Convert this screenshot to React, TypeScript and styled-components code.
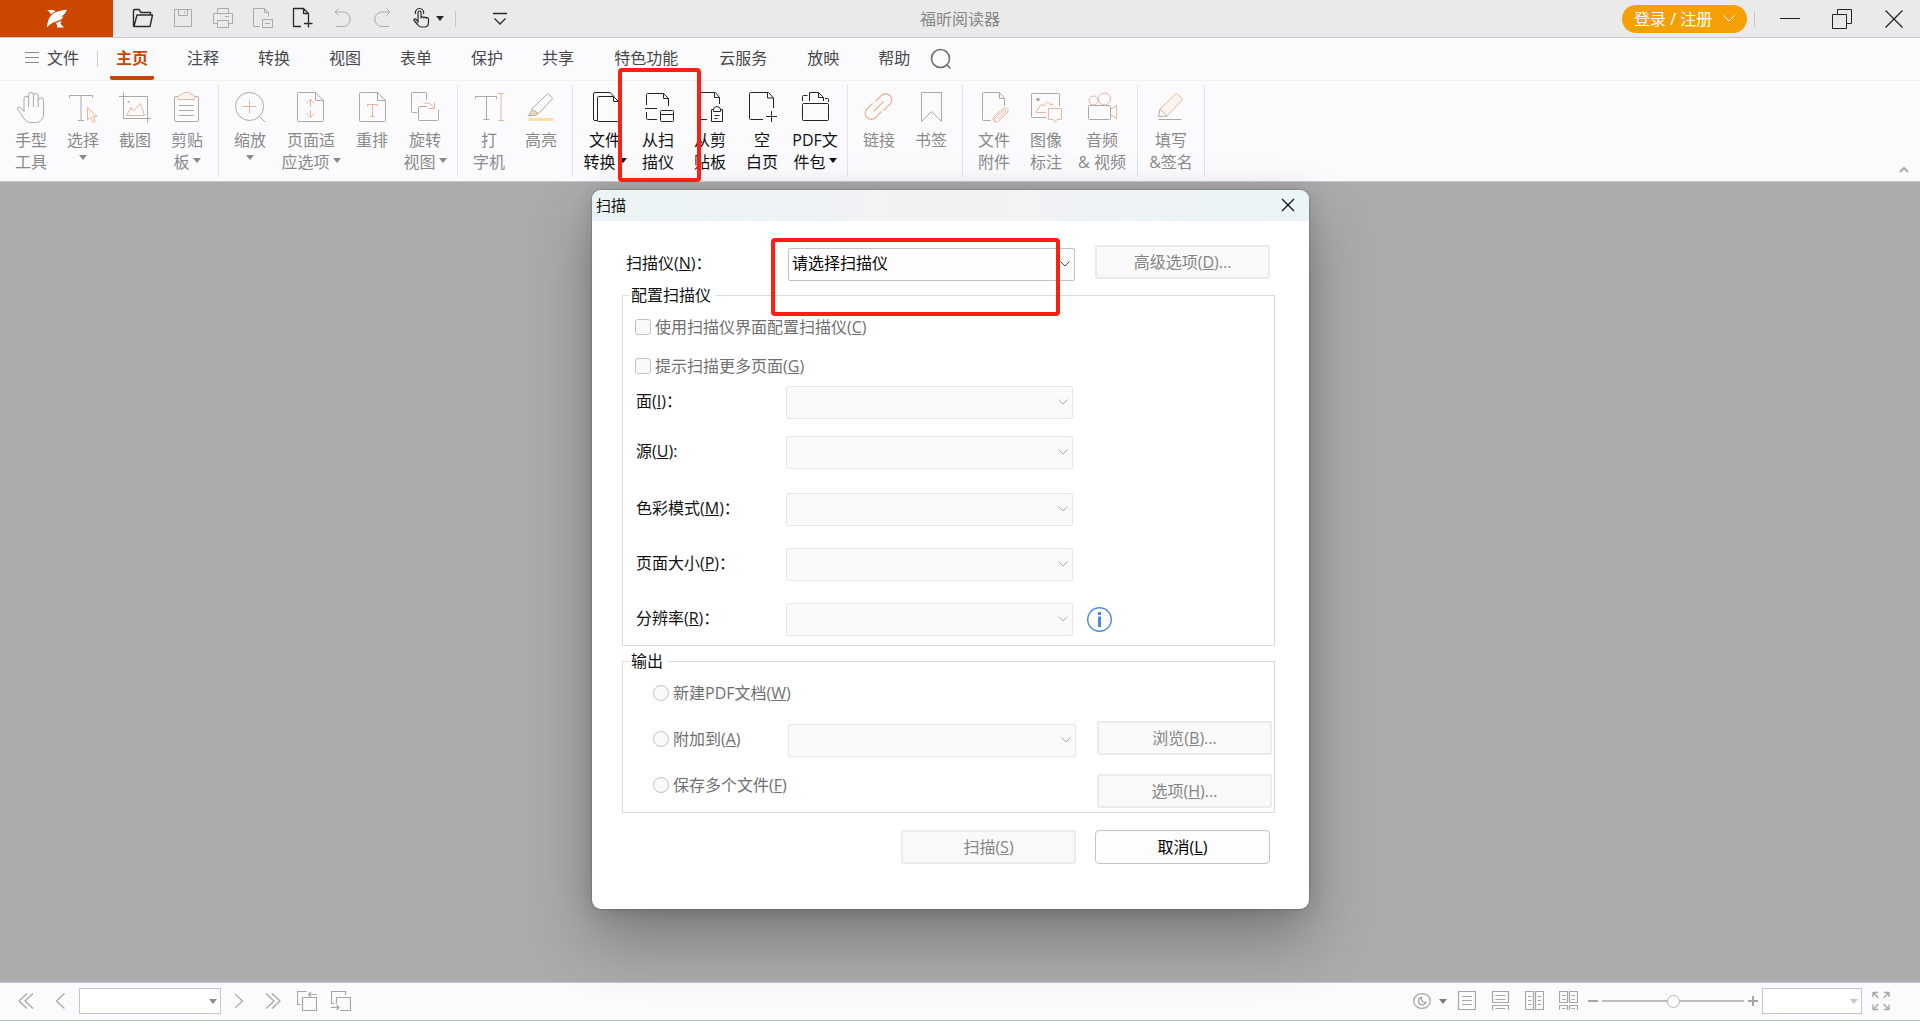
import React from "react";
import styled, { createGlobalStyle, css } from "styled-components";

const GlobalStyle = createGlobalStyle`
  *, *::before, *::after { box-sizing: border-box; }
  body {
    margin: 0;
    font-family: "Open Sans", "Noto Sans CJK SC", sans-serif;
    font-size: 16px;
    line-height: 22px;
    color: #111;
  }
  button, input, select { font: inherit; color: inherit; margin: 0; }
  button { border: 0; padding: 0; background: none; }
  svg { display: block; flex: none; }
`;

const ACCENT = "#e9b59b";
const TINT = "#fdf4ef";

/* ---------- shell ---------- */

const Shell = styled.div`
  min-height: 100vh;
  display: flex;
  flex-direction: column;
`;

const TitleBar = styled.header`
  display: grid;
  grid-template-columns: 1fr auto 1fr;
  height: 38px;
  background: #eaeaea;
  border-bottom: 1px solid #c6c9d8;
`;

const TitleSide = styled.div<{ $end?: boolean }>`
  display: flex;
  align-items: center;
  justify-content: ${(p) => (p.$end ? "flex-end" : "flex-start")};
`;

const Logo = styled.div`
  width: 113px;
  height: 37px;
  margin-right: 18px;
  display: grid;
  place-items: center;
  background: #cb4700;
`;

const QuickTools = styled.div`
  display: flex;
  align-items: center;
  gap: 15px;
`;

const QuickButton = styled.button<{ $dim?: boolean }>`
  display: flex;
  align-items: center;
  color: ${(p) => (p.$dim ? "#ababab" : "#2b2b2b")};
`;

const AppTitle = styled.div`
  align-self: center;
  color: #868686;
`;

const Divider = styled.span<{ $before?: number; $after?: number }>`
  width: 1px;
  height: 16px;
  flex: none;
  background: #c8c8c8;
  margin: 0 ${(p) => p.$after || 0}px 0 ${(p) => p.$before || 0}px;
`;

const Login = styled.button`
  display: flex;
  align-items: center;
  justify-content: space-between;
  width: 125px;
  height: 28px;
  padding: 0 12px;
  border-radius: 14px;
  background: #f5a006;
  color: #fff;
`;

const WindowButtons = styled.div`
  display: flex;
  align-items: center;
  gap: 32px;
  padding-right: 16px;
  color: #222;
`;

const Caret = styled.span<{ $color?: string }>`
  display: inline-block;
  flex: none;
  border: 4px solid transparent;
  border-top: 5px solid ${(p) => p.$color || "currentColor"};
  border-bottom: 0;
`;

/* ---------- menu tabs ---------- */

const TabBar = styled.nav`
  display: flex;
  align-items: stretch;
  height: 43px;
  padding-left: 25px;
  background: #fbfbfe;
  border-bottom: 1px solid #f1f1f3;
  color: #484848;
`;

const FileMenu = styled.button`
  display: flex;
  align-items: center;
  gap: 8px;
  padding-bottom: 2px;
`;

const TabDivider = styled(Divider)`
  align-self: center;
  margin: 0 12px 0 18px;
`;

const Tabs = styled.div`
  display: flex;
  gap: 27px;
`;

const Tab = styled.button<{ $active?: boolean; $wide?: boolean }>`
  padding: 0 ${(p) => (p.$wide ? 7 : 6)}px 2px;
  ${(p) =>
    p.$active &&
    css`
      color: #cb4700;
      font-weight: 700;
      background: linear-gradient(#cb4700, #cb4700) bottom / 100% 4px no-repeat;
      border-radius: 2px;
    `}
`;

const SearchButton = styled.button`
  margin-left: 14px;
  padding-bottom: 1px;
  display: grid;
  place-items: center;
`;

/* ---------- ribbon ---------- */

const Ribbon = styled.div`
  display: flex;
  height: 101px;
  padding: 4px 0;
  background: #fbfbfe;
  border-bottom: 1px solid #c6c9d8;
`;

const RibbonSpacer = styled.div`
  flex: 1;
  display: flex;
  align-items: flex-end;
  justify-content: flex-end;
  padding: 0 11px 4px 0;
`;

const Group = styled.div`
  display: flex;
  padding: 0 5px;
  border-right: 1px solid #e2e2ea;
`;

const ToolButton = styled.button<{ $width: number; $on?: boolean }>`
  position: relative;
  width: ${(p) => p.$width}px;
  padding-top: 6px;
  display: flex;
  flex-direction: column;
  align-items: center;
  white-space: nowrap;
  color: ${(p) => (p.$on ? "#2a2222" : "#a9a9a9")};
`;

const ToolLabel = styled.span<{ $on?: boolean }>`
  margin-top: 6px;
  display: flex;
  flex-direction: column;
  align-items: center;
  color: ${(p) => (p.$on ? "#111" : "#8a8a8a")};
`;

const LabelLine = styled.span`
  display: flex;
  align-items: center;
  gap: 3px;
  height: 22px;
  ${Caret} { margin-bottom: 4px; }
`;

const CaretLine = styled(LabelLine)`
  align-items: flex-start;
  padding-top: 4px;
`;

const Marker = styled.span<{ $x: number; $y: number; $w: number; $h: number }>`
  position: absolute;
  z-index: 2;
  left: ${(p) => p.$x}px;
  top: ${(p) => p.$y}px;
  width: ${(p) => p.$w}px;
  height: ${(p) => p.$h}px;
  border: 4px solid #ff1f12;
  border-radius: 4px;
  pointer-events: none;
`;

/* ---------- dialog ---------- */

const Workspace = styled.main`
  flex: 1;
  display: flex;
  justify-content: center;
  align-items: flex-start;
  padding: 8px 19px 64px 0;
  background: #ababab;
`;

const Dialog = styled.section`
  position: relative;
  z-index: 1;
  width: 717px;
  background: #fff;
  border-radius: 9px;
  box-shadow: 0 0 2px rgba(0, 0, 0, 0.4), 0 2px 21px rgba(0, 0, 0, 0.14),
    0 30px 62px rgba(0, 0, 0, 0.28);
`;

const DialogHeader = styled.div`
  display: flex;
  align-items: center;
  justify-content: space-between;
  height: 31px;
  padding: 0 14px 1px 4px;
  border-radius: 9px 9px 0 0;
  background: linear-gradient(90deg, #ebf4f6, #f2f2f4 50%, #ebf4f6);
`;

const DialogTitle = styled.h1`
  margin: 0;
  font-size: 15px;
  line-height: 22px;
  font-weight: 400;
`;

const DialogBody = styled.form`
  padding: 24px 34px 45px 30px;
`;

const ScannerRow = styled.div`
  display: grid;
  grid-template-columns: 162px 287px 195px;
  height: 36px;
  padding-left: 4px;
  align-items: center;
`;

const FieldSet = styled.fieldset`
  margin: 3px 0 0;
  padding: 0;
  min-width: 0;
  border: 1px solid #dcdcdc;
  & + & { margin-top: 4px; }
`;

const Legend = styled.legend`
  margin-left: 6px;
  padding: 0 5px 0 2px;
`;

const ConfigArea = styled.div`
  padding: 10px 0 9px 12px;
`;

const OutputArea = styled.div`
  padding: 10px 2px 4px 30px;
  display: flex;
  flex-direction: column;
  gap: 17px;
`;

const OutputRow = styled.div<{ $tall?: boolean }>`
  display: grid;
  grid-template-columns: 135px 288px 1fr;
  align-items: start;
  min-height: ${(p) => (p.$tall ? 36 : 22)}px;
`;

const Choice = styled.label<{ $middle?: boolean }>`
  display: flex;
  align-items: center;
  gap: 4px;
  height: 22px;
  white-space: nowrap;
  color: #6f6f6f;
  align-self: ${(p) => (p.$middle ? "center" : "auto")};
  & + & { margin-top: 17px; }
`;

const Tick = styled.input`
  appearance: none;
  width: 16px;
  height: 16px;
  flex: none;
  border: 1px solid #c3c3c3;
  background: #f9f9f9;
  border-radius: ${(p) => (p.type === "radio" ? "50%" : "3px")};
`;

const ConfigRow = styled.div<{ $gap: number }>`
  display: grid;
  grid-template-columns: 151px 287px auto;
  justify-content: start;
  align-items: center;
  margin-top: ${(p) => p.$gap}px;
`;

const FieldLabel = styled.label`
  padding: 0 0 3px 1px;
`;

const SelectBox = styled.div<{ $end?: boolean }>`
  position: relative;
  align-self: ${(p) => (p.$end ? "end" : "auto")};
`;

const SelectChevron = styled.span`
  position: absolute;
  right: 5px;
  top: 13px;
  pointer-events: none;
`;

const Select = styled.select`
  appearance: none;
  display: block;
  width: 100%;
  height: 33px;
  padding: 0 24px 4px 3px;
  border: 1px solid #c2c2c2;
  border-radius: 2px;
  background: #fdfdfd;
  color: #000;
  &:disabled {
    opacity: 1;
    border-color: #e6e6e6;
    background: #fafafa;
  }
`;

const PushButton = styled.button`
  width: 175px;
  height: 34px;
  justify-self: end;
  align-self: start;
  border: 1px solid #c4c4c4;
  border-radius: 4px;
  background: #fdfdfd;
  color: #000;
  &:disabled {
    border: 2px solid #ebebeb;
    border-radius: 2px;
    background: #f9f9f9;
    color: #848484;
  }
`;

const Footer = styled.div`
  display: flex;
  justify-content: flex-end;
  gap: 19px;
  margin-top: 17px;
  padding-right: 5px;
`;

const InfoButton = styled.button`
  margin-left: 14px;
`;

/* ---------- status bar ---------- */

const StatusBar = styled.footer`
  display: flex;
  align-items: center;
  justify-content: space-between;
  height: 39px;
  padding: 0 30px 1px 15px;
  background: #fbfbfe;
  border-top: 1px solid #c2c8d8;
  border-bottom: 1px solid #a9c3ae;
  color: #a6a6a6;
`;

const StatusSide = styled.div<{ $gap: number }>`
  display: flex;
  align-items: center;
  gap: ${(p) => p.$gap}px;
`;

const ComboBox = styled.div<{ $width: number }>`
  position: relative;
  width: ${(p) => p.$width}px;
`;

const ComboSelect = styled.select`
  appearance: none;
  display: block;
  width: 100%;
  height: 26px;
  border: 1px solid #c0c6d8;
  border-radius: 0;
  background: #fff;
  &:disabled { opacity: 1; }
`;

const ComboCaret = styled.span`
  position: absolute;
  right: 4px;
  top: 11px;
  display: flex;
  pointer-events: none;
`;

const ViewButton = styled.button`
  display: flex;
  align-items: center;
  gap: 8px;
`;

const ZoomSlider = styled.input`
  appearance: none;
  width: 142px;
  height: 14px;
  background: linear-gradient(#bdbdbd, #bdbdbd) center / 100% 2px no-repeat;
  &::-webkit-slider-thumb {
    appearance: none;
    width: 13px;
    height: 13px;
    border: 1px solid #b4b4b4;
    border-radius: 50%;
    background: #fff;
  }
`;

/* ---------- drawings ---------- */

type DrawProps = { size?: number; width?: number; children: React.ReactNode };

const Draw = ({ size = 32, width, children }: DrawProps) => (
  <svg
    width={width || size}
    height={size}
    viewBox={`0 0 ${width || size} ${size}`}
    fill="none"
    stroke="currentColor"
    strokeWidth="1"
    strokeLinejoin="round"
    aria-hidden="true"
  >
    {children}
  </svg>
);

const toolIcons: Record<string, React.ReactNode> = {
  hand: (
    <path d="M9 20.5V7.500a2.300 2.300 0 0 1 4.600 0V16M13.600 7V3.800a2.400 2.400 0 0 1 4.800 0V16M18.400 5a2.400 2.400 0 0 1 4.800 0V16M23.200 9.500a2.700 2.700 0 0 1 5.400 0V22c0 6-3 9.500-8 9.500h-4.500c-3.500 0-5.500-1.500-7.500-4.500L2.700 18c-.5-1.500 1.300-2.700 3-1.500L9 20.500" />
  ),
  select: (
    <>
      <path d="M2.500 7V4.500h23V7M14 4.500v25M11 29.500h6" />
      <path d="M20.500 16.500V29l3.300-2.500 2.200 4.800 2.300-1-2.100-4.700h4z" stroke={ACCENT} fill={TINT} />
    </>
  ),
  crop: (
    <>
      <path d="M4.500 1.500v26H32M0 5.500h28.500v26" />
      <circle cx="9.500" cy="11" r="1" fill="currentColor" stroke="none" />
      <path d="M7.500 24.500L12 16.500l2.500 3.500 7-7.500 4 12z" stroke={ACCENT} />
    </>
  ),
  paste: (
    <>
      <rect x="3.500" y="5.500" width="24" height="25" rx="1.500" />
      <path d="M8 14.500h15M8 19.500h15M8 24.500h15" />
      <path d="M7.500 8.500c-1.500-3 0-5 3.500-5 .5-1.300 1.500-2 3-2h3c1.500 0 2.500.7 3 2 3.500 0 5 2 3.500 5z" stroke={ACCENT} fill={TINT} />
    </>
  ),
  zoom: (
    <>
      <circle cx="15.500" cy="15.500" r="14" />
      <path d="M25.500 25.500l5.500 5.500" />
      <path d="M8.500 15.500h14M15.500 8.500v14" stroke={ACCENT} />
    </>
  ),
  fit: (
    <>
      <path d="M20.500 1.500h-17a1 1 0 0 0-1 1v27a1 1 0 0 0 1 1h24a1 1 0 0 0 1-1v-20zv8h8" />
      <path d="M15.500 9v7M15.500 19v7M11.500 12.500l4-4 4 4M11.500 22.500l4 4 4-4" stroke={ACCENT} />
    </>
  ),
  reflow: (
    <>
      <path d="M21.500 1.500h-17a1 1 0 0 0-1 1v27a1 1 0 0 0 1 1h24a1 1 0 0 0 1-1v-20zv8h8" />
      <path d="M11.500 15.500v-2h10v2M16.500 13.500v12M14.500 25.500h4" stroke={ACCENT} />
    </>
  ),
  rotate: (
    <>
      <path d="M8 21.500H3.500a1 1 0 0 1-1-1v-18a1 1 0 0 1 1-1h13a1 1 0 0 1 1 1V9M18 15.500h-7.500a1 1 0 0 0-1 1v12a1 1 0 0 0 1 1h18a1 1 0 0 0 1-1V19" />
      <path d="M14.500 12.500c4-1.500 8 0 10.500 4.500M25.500 11.500v6h-6" stroke={ACCENT} />
    </>
  ),
  type: (
    <>
      <path d="M2.500 8V5.500h21V8M13.500 5.500v23M10.500 28.500h6" />
      <path d="M25 2.500h6M25 29.500h6M28 2.500v27" stroke={ACCENT} />
    </>
  ),
  highlight: (
    <>
      <path d="M3.500 28.500h25" stroke="#fbe0a4" strokeWidth="3" />
      <path d="M7 17.500L22 3.500c.5-.5 1.300-.5 1.800 0L27 6.500c.5.500.5 1.300 0 1.800L13.500 22.500l-6-2z" />
      <path d="M7.500 18.500l-4 6.500 8-1 1-2z" fill="#f6dcae" />
    </>
  ),
  convert: (
    <>
      <path d="M9 29.500H6a1.500 1.500 0 0 1-1.500-1.500V3A1.500 1.500 0 0 1 6 1.500h15l4 4" />
      <path d="M24.500 5.500h-15a1 1 0 0 0-1 1v23a1 1 0 0 0 1 1h19a1 1 0 0 0 1-1v-19zv5h5" />
    </>
  ),
  scanner: (
    <>
      <path d="M4.500 14V3.500a1 1 0 0 1 1-1h16l5 5V15M21.500 2.500v5h5M3 17.500h12M4.500 21v6.500a1 1 0 0 0 1 1H15" />
      <rect x="18.500" y="19.500" width="13" height="11" rx="1" />
      <path d="M18.500 23.500h13" />
    </>
  ),
  fromClip: (
    <>
      <path d="M13 28.500H4.500a1 1 0 0 1-1-1v-25a1 1 0 0 1 1-1h17l4 5V13M20.500 1.500v5h5" />
      <path d="M19.500 18.500h-2v12h11v-12h-2M19.500 20.500v-2a3 2.500 0 0 1 7 0v2zM20.500 24.500h5M20.500 27.500h3" />
    </>
  ),
  blank: (
    <path d="M17 28.500H4.500a1 1 0 0 1-1-1v-25a1 1 0 0 1 1-1h18l5 5.500V17M21.500 1.500v5.500h6M25.500 20v11M20 25.500h11" />
  ),
  portfolio: (
    <>
      <rect x="3.500" y="12.500" width="26" height="17" rx="1" />
      <path d="M10.500 10V1.500h9l5 5V10M19.500 1.500v5h5M3.500 10V5.500a1 1 0 0 1 1-1h4M26 7.500h2.500a1 1 0 0 1 1 1V11" />
    </>
  ),
  link: (
    <path d="M12.500 10.500l6-6a6 6 0 0 1 8.500 8.500l-6.500 6.500M9.500 12.500L4 18a6 6 0 0 0 8.500 8.500l6-6M10.500 20.500l10-10" stroke={ACCENT} strokeWidth="1.300" />
  ),
  bookmark: <path d="M6.500 1.500h20v29L16.500 20.500l-10 10z" />,
  attach: (
    <>
      <path d="M12.500 29.500h-7a1 1 0 0 1-1-1v-26a1 1 0 0 1 1-1h16l5 6V15M21.500 1.500v6h5" />
      <path d="M20 28l7-6.500c1.500-1.500 0-3.500-1.700-2l-8 7.300c-2.500 2.500.7 5.500 3.200 3.200l8.500-8c3-3-1-7-4-4.300L16.500 25c-2.500 2.500-1.500 6 2 6" stroke={ACCENT} />
    </>
  ),
  imageNote: (
    <>
      <path d="M16 26.500H2.500a1 1 0 0 1-1-1v-22a1 1 0 0 1 1-1h26a1 1 0 0 1 1 1V15" />
      <circle cx="8" cy="8.500" r="1.800" fill="currentColor" stroke="none" />
      <path d="M16 21.500H6l4.500-7.500h2l1.500 1 2.500-3.500h2l2 3 1.500-2 1 2M18.500 17.500h13v11H27l-2 2.500-2-2.500h-4.500z" stroke={ACCENT} />
    </>
  ),
  media: (
    <>
      <rect x="2.500" y="14.500" width="22" height="14" rx="1" />
      <path d="M24.500 18.500l6-4v13l-6-4" stroke={ACCENT} />
      <circle cx="7.500" cy="9.500" r="4.500" stroke={ACCENT} />
      <circle cx="18.500" cy="8" r="6" stroke={ACCENT} />
    </>
  ),
  sign: (
    <>
      <path d="M5 18L20.500 3c.6-.6 1.400-.6 2 0L27 7.500c.5.500.5 1.200 0 1.700L12 25z" stroke={ACCENT} fill={TINT} />
      <path d="M5 18l-1.500 7.500L12 25M3.500 28.500h23" />
    </>
  ),
};

const quickIcons: Record<string, React.ReactNode> = {
  open: <path d="M3 20.500a.5.500 0 0 1-.5-.5V4.500a1 1 0 0 1 1-1H8l2 3h9.500V9M3 20.500L6 9h15.500L19 20.500z" strokeWidth="1.400" />,
  save: <path d="M3.500 3.500h17v17h-17zM7.500 3.500v6h9v-6M13.500 5.500v2" />,
  print: <path d="M6.500 7.500v-5h11v5M6.500 17.500h-4v-10h19v10h-4M6.500 14.500h11v7h-11zM14 10.500h4" />,
  batch: <path d="M9 20.500H2.500v-18h11l4 4v4M13.500 2.500v4h4M11.500 13.500h10v8h-10zM14 17.500h5" />,
  create: <path d="M10 20.500H2.500v-18h10l5 5V13M12.500 2.500v5h5M17.500 13v8.500M13 17.500h8.500" strokeWidth="1.300" />,
  undo: <path d="M7.500 2.500L4 6h8a7.200 7.200 0 0 1 0 14.500H5M4 6l3.500 3.500" />,
  redo: <path d="M15.500 2.500L19 6h-8a7.200 7.200 0 0 0 0 14.500h7M19 6l-3.500 3.500" />,
  touch: (
    <path d="M7 17V6.500a1.500 1.500 0 0 1 3 0V12c0-1.500 2.800-1.500 2.800 0 0-1.300 2.500-1.300 2.500.3 0-1.200 2.200-1 2.200.7v3.500c0 3-2 4.500-4.500 4.500h-2.500c-2 0-3-1-4-2.500L3 14.500c-.5-1.500 1-2 2-1L7 15.500M4.500 8a4.200 4.200 0 1 1 8 0" strokeWidth="1.200" />
  ),
};

/* ---------- content ---------- */

type Tool = { icon: string; lines: string[]; width?: number; caret?: boolean; on?: boolean; marked?: boolean };

const groups: Tool[][] = [
  [
    { icon: "hand", lines: ["手型", "工具"] },
    { icon: "select", lines: ["选择"], caret: true },
    { icon: "crop", lines: ["截图"] },
    { icon: "paste", lines: ["剪贴", "板"], caret: true },
  ],
  [
    { icon: "zoom", lines: ["缩放"], caret: true },
    { icon: "fit", lines: ["页面适", "应选项"], caret: true, width: 70 },
    { icon: "reflow", lines: ["重排"] },
    { icon: "rotate", lines: ["旋转", "视图"], caret: true, width: 54 },
  ],
  [
    { icon: "type", lines: ["打", "字机"] },
    { icon: "highlight", lines: ["高亮"] },
  ],
  [
    { icon: "convert", lines: ["文件", "转换"], caret: true, on: true, width: 54 },
    { icon: "scanner", lines: ["从扫", "描仪"], on: true, marked: true },
    { icon: "fromClip", lines: ["从剪", "贴板"], on: true },
    { icon: "blank", lines: ["空", "白页"], on: true },
    { icon: "portfolio", lines: ["PDF文", "件包"], caret: true, on: true, width: 54 },
  ],
  [
    { icon: "link", lines: ["链接"] },
    { icon: "bookmark", lines: ["书签"] },
  ],
  [
    { icon: "attach", lines: ["文件", "附件"] },
    { icon: "imageNote", lines: ["图像", "标注"] },
    { icon: "media", lines: ["音频", "& 视频"], width: 60 },
  ],
  [{ icon: "sign", lines: ["填写", "&签名"], width: 56 }],
];

const tabs = ["主页", "注释", "转换", "视图", "表单", "保护", "共享", "特色功能", "云服务", "放映", "帮助"];

const configFields = [
  { id: "side", name: "面", hotkey: "I", colon: "：", gap: 9 },
  { id: "source", name: "源", hotkey: "U", colon: ":", gap: 17 },
  { id: "color", name: "色彩模式", hotkey: "M", colon: "：", gap: 24 },
  { id: "pageSize", name: "页面大小", hotkey: "P", colon: "：", gap: 22 },
  { id: "resolution", name: "分辨率", hotkey: "R", colon: "：", gap: 22, info: true },
];

const Hot = ({ text, k, tail = "" }: { text: string; k: string; tail?: string }) => (
  <span>
    {text}(<u>{k}</u>){tail}
  </span>
);

const ToolItem = ({ tool }: { tool: Tool }) => {
  const caret = tool.caret ? <Caret /> : null;
  return (
    <ToolButton type="button" $width={tool.width || 52} $on={tool.on}>
      <Draw>{toolIcons[tool.icon]}</Draw>
      <ToolLabel $on={tool.on}>
        <LabelLine>{tool.lines[0]}</LabelLine>
        {tool.lines[1] ? (
          <LabelLine>
            {tool.lines[1]}
            {caret}
          </LabelLine>
        ) : (
          caret && <CaretLine>{caret}</CaretLine>
        )}
      </ToolLabel>
      {tool.marked && <Marker $x={-14} $y={-17} $w={83} $h={114} />}
    </ToolButton>
  );
};

type DropProps = { id: string; label?: string; value?: string; end?: boolean; marked?: boolean };

const Drop = ({ id, label, value, end, marked }: DropProps) => (
  <SelectBox $end={end}>
    <Select id={id} aria-label={label} disabled={!value}>
      {value && <option>{value}</option>}
    </Select>
    <SelectChevron>
      <svg width="10" height="6" fill="none" stroke={value ? "#444" : "#ababab"}>
        <path d="M.5.500l4.500 4.500L9.500.5" />
      </svg>
    </SelectChevron>
    {marked && <Marker $x={-17} $y={-10} $w={289} $h={78} />}
  </SelectBox>
);

const QuickIcon = ({ name, label, dim, caret }: { name: string; label: string; dim?: boolean; caret?: boolean }) => (
  <QuickButton type="button" aria-label={label} $dim={dim}>
    <Draw size={25}>{quickIcons[name]}</Draw>
    {caret && <Caret />}
  </QuickButton>
);

export default function App() {
  return (
    <Shell>
      <GlobalStyle />
      <TitleBar>
        <TitleSide>
          <Logo>
            <svg width="22" height="20" viewBox="0 0 22 20" fill="#fff">
              <path d="M21 .5C14 1.500 8.500 3 5.500 6 2.500 9 1.500 13 .8 18.500 4 14.500 8 13 12.500 11.500c3-1 4-2 5-4l-2.500.3c2.500-1.500 5-4 6-7.300z" />
              <path d="M1 1h6.500l2 1.700C7.500 3.300 6 4 4.800 5.200 4 3.500 2.500 2 1 1zM9.500 14c2.500-.8 4.500-1.500 6-2.500l-1 3c1 1.500 2 2.500 3.500 4h-7c.5-1.800 0-3.200-1.500-4.500z" />
            </svg>
          </Logo>
          <QuickTools>
            <QuickIcon name="open" label="打开" />
            <QuickIcon name="save" label="保存" dim />
            <QuickIcon name="print" label="打印" dim />
            <QuickIcon name="batch" label="批量打印" dim />
            <QuickIcon name="create" label="新建" />
            <QuickIcon name="undo" label="撤销" dim />
            <QuickIcon name="redo" label="重做" dim />
            <QuickIcon name="touch" label="触摸模式" caret />
          </QuickTools>
          <Divider $before={11} $after={36} />
          <QuickButton type="button" aria-label="自定义快速访问工具栏">
            <svg width="16" height="16" fill="none" stroke="currentColor" strokeWidth="1.300">
              <path d="M1 2.500h14M2.500 7.500L8 13l5.500-5.500" />
            </svg>
          </QuickButton>
        </TitleSide>
        <AppTitle>福昕阅读器</AppTitle>
        <TitleSide $end>
          <Login type="button">
            登录 / 注册
            <svg width="12" height="7" fill="none" stroke="#fff">
              <path d="M.5.500L6 6 11.500.5" />
            </svg>
          </Login>
          <Divider $before={7} $after={25} />
          <WindowButtons>
            <button type="button" aria-label="最小化">
              <svg width="20" height="20" stroke="currentColor">
                <path d="M0 9.500h20" />
              </svg>
            </button>
            <button type="button" aria-label="还原">
              <svg width="20" height="20" fill="none" stroke="currentColor">
                <path d="M.5 5.500h14v14H.5zM5.500 5.500v-5h14v14h-5" />
              </svg>
            </button>
            <button type="button" aria-label="关闭">
              <svg width="20" height="20" stroke="currentColor" strokeWidth="1.200">
                <path d="M1.500 1.500l17 17M18.500 1.500l-17 17" />
              </svg>
            </button>
          </WindowButtons>
        </TitleSide>
      </TitleBar>

      <TabBar>
        <FileMenu type="button">
          <svg width="14" height="14" stroke="#8a8a8a">
            <path d="M0 1.500h14M0 6.500h14M0 11.500h14" />
          </svg>
          文件
        </FileMenu>
        <TabDivider />
        <Tabs>
          {tabs.map((name, i) => (
            <Tab type="button" key={name} $active={i === 0} $wide={name.length > 2}>
              {name}
            </Tab>
          ))}
        </Tabs>
        <SearchButton type="button" aria-label="搜索">
          <svg width="22" height="22" fill="none" stroke="#6e6e6e" strokeWidth="1.600">
            <circle cx="10.500" cy="10.500" r="9" />
            <path d="M16.500 16.500l4 4" />
          </svg>
        </SearchButton>
      </TabBar>

      <Ribbon>
        {groups.map((tools, i) => (
          <Group key={i}>
            {tools.map((tool) => (
              <ToolItem key={tool.icon} tool={tool} />
            ))}
          </Group>
        ))}
        <RibbonSpacer>
          <button type="button" aria-label="折叠功能区">
            <svg width="10" height="7" fill="none" stroke="#aaa" strokeWidth="2">
              <path d="M1 6l4-4 4 4" />
            </svg>
          </button>
        </RibbonSpacer>
      </Ribbon>

      <Workspace>
        <Dialog role="dialog" aria-labelledby="scan-title">
          <DialogHeader>
            <DialogTitle id="scan-title">扫描</DialogTitle>
            <button type="button" aria-label="关闭对话框">
              <svg width="14" height="14" stroke="#111" strokeWidth="1.300">
                <path d="M1 1l12 12M13 1L1 13" />
              </svg>
            </button>
          </DialogHeader>
          <DialogBody onSubmit={(e) => e.preventDefault()}>
            <ScannerRow>
              <label htmlFor="scanner">
                <Hot text="扫描仪" k="N" tail="：" />
              </label>
              <Drop id="scanner" value="请选择扫描仪" end marked />
              <PushButton type="button" disabled>
                <Hot text="高级选项" k="D" tail="..." />
              </PushButton>
            </ScannerRow>

            <FieldSet>
              <Legend>配置扫描仪</Legend>
              <ConfigArea>
                <Choice>
                  <Tick type="checkbox" disabled />
                  <Hot text="使用扫描仪界面配置扫描仪" k="C" />
                </Choice>
                <Choice>
                  <Tick type="checkbox" disabled />
                  <Hot text="提示扫描更多页面" k="G" />
                </Choice>
                {configFields.map((f) => (
                  <ConfigRow key={f.id} $gap={f.gap}>
                    <FieldLabel htmlFor={f.id}>
                      <Hot text={f.name} k={f.hotkey} tail={f.colon} />
                    </FieldLabel>
                    <Drop id={f.id} />
                    {f.info && (
                      <InfoButton type="button" aria-label="分辨率说明">
                        <svg width="25" height="25" fill="none" stroke="#4a88dc">
                          <circle cx="12.500" cy="12.500" r="11.800" strokeWidth="1.400" />
                          <path d="M12.500 9.500v10.500M12.500 5v3" strokeWidth="3" />
                        </svg>
                      </InfoButton>
                    )}
                  </ConfigRow>
                ))}
              </ConfigArea>
            </FieldSet>

            <FieldSet>
              <Legend>输出</Legend>
              <OutputArea>
                <OutputRow>
                  <Choice>
                    <Tick type="radio" name="output" disabled />
                    <Hot text="新建PDF文档" k="W" />
                  </Choice>
                </OutputRow>
                <OutputRow $tall>
                  <Choice $middle>
                    <Tick type="radio" name="output" disabled />
                    <Hot text="附加到" k="A" />
                  </Choice>
                  <Drop id="target" label="附加到的文件" end />
                  <PushButton type="button" disabled>
                    <Hot text="浏览" k="B" tail="..." />
                  </PushButton>
                </OutputRow>
                <OutputRow>
                  <Choice>
                    <Tick type="radio" name="output" disabled />
                    <Hot text="保存多个文件" k="F" />
                  </Choice>
                  <span />
                  <PushButton type="button" disabled>
                    <Hot text="选项" k="H" tail="..." />
                  </PushButton>
                </OutputRow>
              </OutputArea>
            </FieldSet>

            <Footer>
              <PushButton type="submit" disabled>
                <Hot text="扫描" k="S" />
              </PushButton>
              <PushButton type="button">
                <Hot text="取消" k="L" />
              </PushButton>
            </Footer>
          </DialogBody>
        </Dialog>
      </Workspace>

      <StatusBar>
        <StatusSide $gap={14}>
          <button type="button" aria-label="首页">
            <Draw size={20} width={22}><path d="M12 2.500L4 10l8 7.500M18 2.500L10 10l8 7.500" strokeWidth="1.200" /></Draw>
          </button>
          <button type="button" aria-label="上一页">
            <Draw size={20} width={14}><path d="M13.500 2.500L5.500 10l8 7.500" strokeWidth="1.200" /></Draw>
          </button>
          <ComboBox $width={142}>
            <ComboSelect aria-label="页码" disabled />
            <ComboCaret><Caret $color="#8a8a8a" /></ComboCaret>
          </ComboBox>
          <button type="button" aria-label="下一页">
            <Draw size={20} width={14}><path d="M-.5 2.500l8 7.500-8 7.500" strokeWidth="1.200" /></Draw>
          </button>
          <button type="button" aria-label="末页">
            <Draw size={20}><path d="M3 2.500l8 7.500-8 7.500M9 2.500l8 7.500-8 7.500" strokeWidth="1.200" /></Draw>
          </button>
          <button type="button" aria-label="上一视图">
            <Draw size={20}><path d="M9.500.500H.5v13h3M5.500 6.500h14v13h-14zM19.500 3.500h-8M14 1l-2.500 2.500L14 6" strokeWidth="1.200" /></Draw>
          </button>
          <button type="button" aria-label="下一视图">
            <Draw size={20}><path d="M14.500 4V.500H.5v12H3M9 19.500h10.500v-13h-14v6M0 16.500h8M5.500 14L8 16.500 5.500 19" strokeWidth="1.200" /></Draw>
          </button>
        </StatusSide>
        <StatusSide $gap={10}>
          <ViewButton type="button" aria-label="阅读模式">
            <Draw size={20} width={18}>
              <ellipse cx="9" cy="10" rx="8.300" ry="7.300" strokeWidth="1.300" />
              <path d="M8.500 6.500a3.700 3.700 0 1 0 4.300 4.700c-2.300.8-4.800-1.200-4.300-4.700z" strokeWidth="1.300" />
            </Draw>
            <Caret $color="#7c7c7c" />
          </ViewButton>
          <StatusSide $gap={15}>
            <button type="button" aria-label="单页">
              <Draw size={20} width={19}><path d="M1.500.500h17v18h-17zM5 5.500h10M5 9.500h10M5 13.500h10" strokeWidth="1.200" /></Draw>
            </button>
            <button type="button" aria-label="连续">
              <Draw size={20} width={19}><path d="M1.500.500h16v11h-16zM4.500 4.500h10M4.500 8.500h10M1.500 19v-4.500h16V19M4.500 17.500h10" strokeWidth="1.200" /></Draw>
            </button>
            <button type="button" aria-label="双页">
              <Draw size={20} width={19}><path d="M.5.500h8v18h-8zM10.500.500h8v18h-8zM3 5.500h3.500M3 9.500h3.500M3 13.500h3.500M12.500 5.500H16M12.500 9.500H16M12.500 13.500H16" strokeWidth="1.200" /></Draw>
            </button>
            <button type="button" aria-label="连续双页">
              <Draw size={20} width={19}><path d="M.5.500h8v11h-8zM10.500.500h8v11h-8zM3 4.500h3.500M3 8.500h3.500M12.500 4.500H16M12.500 8.500H16M.5 19v-4.500h8V19M10.500 19v-4.500h8V19M3 17.500h3.500M12.500 17.500H16" strokeWidth="1.200" /></Draw>
            </button>
          </StatusSide>
          <StatusSide $gap={4}>
            <button type="button" aria-label="缩小">
              <Draw size={20} width={10}><path d="M0 10h10" strokeWidth="2" /></Draw>
            </button>
            <ZoomSlider type="range" aria-label="缩放" defaultValue={50} />
            <button type="button" aria-label="放大">
              <Draw size={20} width={10}><path d="M0 10h10M5 5v10" strokeWidth="2" /></Draw>
            </button>
            <ComboBox $width={100}>
              <ComboSelect aria-label="缩放比例" disabled />
              <ComboCaret><Caret $color="#c4c4c4" /></ComboCaret>
            </ComboBox>
          </StatusSide>
          <button type="button" aria-label="全屏">
            <Draw size={20} width={18}><path d="M1 6V1.500h5M1 1.500l5.500 5.500M12 1.500h5V6M17 1.500l-5.500 5.500M1 13.500v5h5M1 18.500l5.500-5.500M17 13.500v5h-5M17 18.500l-5.500-5.500" strokeWidth="1.300" /></Draw>
          </button>
        </StatusSide>
      </StatusBar>
    </Shell>
  );
}
